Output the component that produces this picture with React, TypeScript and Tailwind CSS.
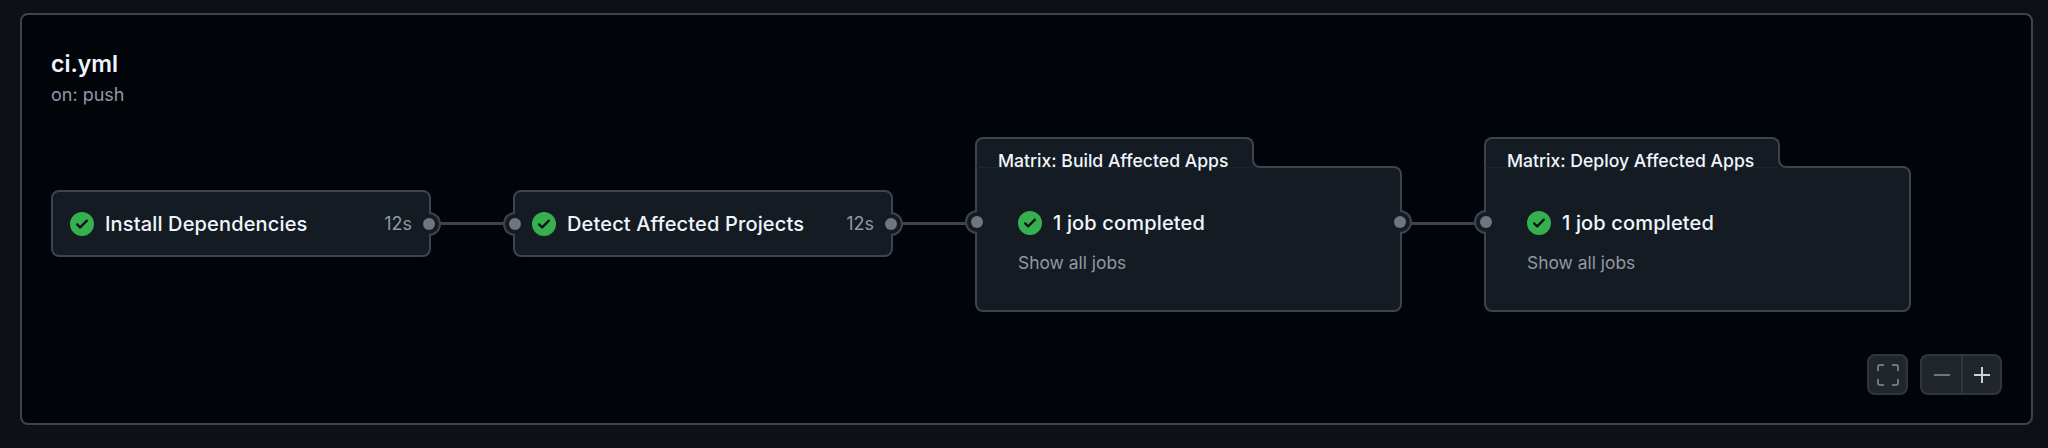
import type { ReactNode } from 'react'

function CheckIcon() {
  return (
    <svg width="24" height="24" viewBox="0 0 16 16" className="shrink-0">
      <circle cx="8" cy="8" r="5.5" fill="#0d1117" />
      <path
        fill="#36b04f"
        d="M8 16A8 8 0 1 1 8 0a8 8 0 0 1 0 16Zm3.78-9.72a.751.751 0 0 0-.018-1.042.751.751 0 0 0-1.042-.018L6.75 9.19 5.28 7.72a.751.751 0 0 0-1.042.018.751.751 0 0 0-.018 1.042l2 2a.75.75 0 0 0 1.06 0Z"
      />
    </svg>
  )
}

function Port({ side, top }: { side: 'left' | 'right'; top: string }) {
  if (side === 'left') {
    return (
      <span className={`absolute left-[-12px] h-[24px] w-[12px] rounded-l-full border-2 border-r-0 border-[#3d444d] bg-[#151b23] ${top}`}>
        <span className="absolute right-[-6px] top-[4px] h-[12px] w-[12px] rounded-full bg-[#6e7681]" />
      </span>
    )
  }
  return (
    <span className={`absolute right-[-12px] h-[24px] w-[12px] rounded-r-full border-2 border-l-0 border-[#3d444d] bg-[#151b23] ${top}`}>
      <span className="absolute left-[-6px] top-[4px] h-[12px] w-[12px] rounded-full bg-[#6e7681]" />
    </span>
  )
}

function Job({ name, ports }: { name: string; ports: Array<'left' | 'right'> }) {
  return (
    <div className="relative mt-[53px] flex h-[67px] w-[380px] shrink-0 items-center rounded-[8px] border-2 border-[#3d444d] bg-[#151b23] pl-[17px] pr-[17px]">
      {ports.map((side) => (
        <Port key={side} side={side} top="top-[20px]" />
      ))}
      <CheckIcon />
      <span className="ml-[11px] text-[20px] font-medium tracking-[0.15px] text-[#f0f6fc]">{name}</span>
      <span className="ml-auto text-[18px] text-[#9198a1]">12s</span>
    </div>
  )
}

function Connector({ className }: { className: string }) {
  return <div className={`mt-[85px] h-[3px] shrink-0 bg-[#3d444d] ${className}`} />
}

function Matrix({ title, tabWidth, ports }: { title: string; tabWidth: string; ports: Array<'left' | 'right'> }) {
  return (
    <div className="flex w-[427px] shrink-0 flex-col">
      <div className={`relative z-10 -mb-[2px] h-[31px] rounded-t-[8px] border-2 border-b border-[#3d444d] border-b-[#1f252d] bg-[#151b23] pl-[21px] pt-[10px] ${tabWidth}`}>
        <span className="block whitespace-nowrap text-[17.6px] font-medium leading-[24px] text-[#f0f6fc]">{title}</span>
        <span className="absolute bottom-[-1px] left-full h-[8px] w-[8px] bg-[#151b23]">
          <span className="block h-full w-full rounded-bl-[8px] border-b-2 border-l-2 border-[#3d444d] bg-[#010409]" />
        </span>
      </div>
      <div className="relative h-[146px] rounded-[8px] rounded-tl-none border-2 border-[#3d444d] bg-[#151b23] pl-[41px] pt-[43px]">
        {ports.map((side) => (
          <Port key={side} side={side} top="top-[42px]" />
        ))}
        <div className="flex h-[24px] items-center">
          <CheckIcon />
          <span className="ml-[11px] text-[20px] font-medium tracking-[0.15px] text-[#f0f6fc]">1 job completed</span>
        </div>
        <p className="mt-[16px] text-[17.4px] leading-[24px] text-[#9198a1]">Show all jobs</p>
      </div>
    </div>
  )
}

function ControlButton({ children, className }: { children: ReactNode; className: string }) {
  return <div className={`flex h-[41px] items-center justify-center border-2 border-[#30363d] bg-[#21262d] ${className}`}>{children}</div>
}

export default function App() {
  return (
    <div className="h-[448px] bg-[#0d1117] px-[20px] pt-[13px] font-['Inter',sans-serif]">
      <div className="relative h-[412px] w-[2013px] rounded-[8px] border-2 border-[#3d444d] bg-[#010409] pl-[29px] pt-[33px]">
        <h1 className="text-[23px] font-semibold leading-[32px] text-[#f0f6fc]">ci.yml</h1>
        <p className="mt-[3px] text-[18px] leading-[24px] text-[#9198a1]">on: push</p>

        <div className="mt-[30px] flex items-start">
          <Job name="Install Dependencies" ports={['right']} />
          <Connector className="w-[82px]" />
          <Job name="Detect Affected Projects" ports={['left', 'right']} />
          <Connector className="w-[82px]" />
          <Matrix title="Matrix: Build Affected Apps" tabWidth="w-[279px]" ports={['left', 'right']} />
          <Connector className="w-[82px]" />
          <Matrix title="Matrix: Deploy Affected Apps" tabWidth="w-[296px]" ports={['left']} />
        </div>

        <div className="absolute bottom-[28px] right-[29px] flex gap-[12px]">
          <ControlButton className="w-[41px] rounded-[8px]">
            <svg width="24" height="24" viewBox="0 0 24 24" fill="none" stroke="#6e7681" strokeWidth="2">
              <path d="M2 8V4a2 2 0 0 1 2-2h4M16 2h4a2 2 0 0 1 2 2v4M22 16v4a2 2 0 0 1-2 2h-4M8 22H4a2 2 0 0 1-2-2v-4" />
            </svg>
          </ControlButton>
          <div className="flex">
            <ControlButton className="w-[41px] rounded-l-[8px] border-r-0">
              <svg width="20" height="20" viewBox="0 0 20 20" stroke="#6e7681" strokeWidth="2"><path d="M2 10h16" /></svg>
            </ControlButton>
            <ControlButton className="w-[41px] rounded-r-[8px]">
              <svg width="20" height="20" viewBox="0 0 20 20" stroke="#c9d1d9" strokeWidth="2"><path d="M2 10h16M10 2v16" /></svg>
            </ControlButton>
          </div>
        </div>
      </div>
    </div>
  )
}
